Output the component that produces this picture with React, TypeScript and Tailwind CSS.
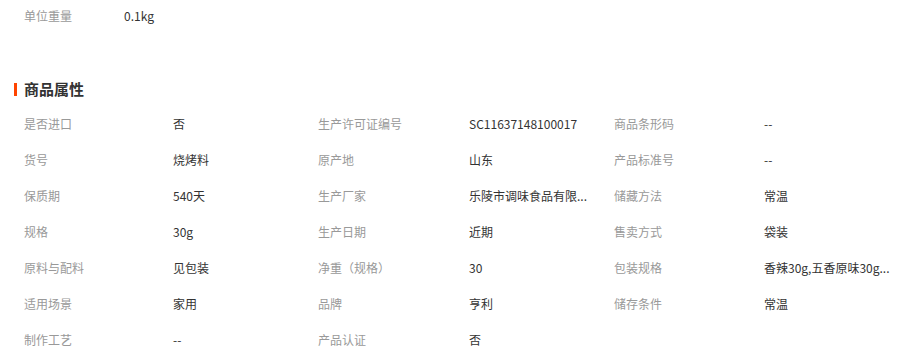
const rows: [string, string, string, string, string, string][] = [
  ["是否进口", "否", "生产许可证编号", "SC11637148100017", "商品条形码", "--"],
  ["货号", "烧烤料", "原产地", "山东", "产品标准号", "--"],
  ["保质期", "540天", "生产厂家", "乐陵市调味食品有限...", "储藏方法", "常温"],
  ["规格", "30g", "生产日期", "近期", "售卖方式", "袋装"],
  ["原料与配料", "见包装", "净重（规格）", "30", "包装规格", "香辣30g,五香原味30g..."],
  ["适用场景", "家用", "品牌", "亨利", "储存条件", "常温"],
  ["制作工艺", "--", "产品认证", "否", "", ""],
];

export default function App() {
  return (
    <div className="w-[922px] h-[353px] overflow-hidden bg-white text-[12px] font-['Noto_Sans_CJK_SC','Noto_Sans',sans-serif]">
      {/* 基本信息末行 */}
      <div className="flex h-[32px] items-center pl-6">
        <span className="w-[100px] text-[#999]">单位重量</span>
        <span className="text-[#333]">0.1kg</span>
      </div>

      {/* 标题 */}
      <div className="mt-[47px] flex h-[20px] items-center pl-[14px]">
        <span className="h-[13px] w-[3px] bg-[#ff4400]" />
        <span className="ml-[7px] text-[15px] font-bold text-[#333]">商品属性</span>
      </div>

      {/* 属性表 */}
      <div className="mt-[7px] grid grid-cols-[149px_145px_151px_145px_150px_1fr] pl-6">
        {rows.map((r, i) =>
          r.map((cell, j) => (
            <div
              key={`${i}-${j}`}
              className={`flex h-[36px] items-center whitespace-nowrap ${j % 2 === 0 ? "text-[#999]" : "text-[#333]"}`}
            >
              {cell}
            </div>
          ))
        )}
      </div>
    </div>
  );
}
